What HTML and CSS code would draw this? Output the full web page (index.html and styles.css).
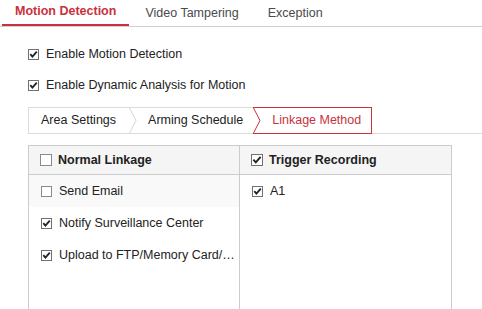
FILE: index.html
```html
<!DOCTYPE html>
<html>
<head>
<meta charset="utf-8">
<link rel="stylesheet" href="styles.css">
</head>
<body>
<div class="page">
  <div class="tabs">
    <div class="tab active">Motion Detection</div>
    <div class="tab">Video Tampering</div>
    <div class="tab">Exception</div>
  </div>

  <div class="options">
    <label class="opt">
      <svg class="cb" viewBox="0 0 11 11" width="11" height="11"><rect x="0.5" y="0.5" width="10" height="10" fill="#fff" stroke="#707070"/><polyline points="2.3,5.2 4.4,7.6 8.8,2.6" fill="none" stroke="#222" stroke-width="1.8"/></svg>
      <span>Enable Motion Detection</span>
    </label>
    <label class="opt">
      <svg class="cb" viewBox="0 0 11 11" width="11" height="11"><rect x="0.5" y="0.5" width="10" height="10" fill="#fff" stroke="#707070"/><polyline points="2.3,5.2 4.4,7.6 8.8,2.6" fill="none" stroke="#222" stroke-width="1.8"/></svg>
      <span>Enable Dynamic Analysis for Motion</span>
    </label>
  </div>

  <div class="subtabs">
    <div class="group">
      <div class="stab first">Area Settings</div>
      <svg class="sep" viewBox="0 0 8 25" width="8" height="25"><polyline points="0.5,0 7,12.5 0.5,25" fill="none" stroke="#d6d6d6" stroke-width="1"/></svg>
      <div class="stab second">Arming Schedule</div>
    </div>
    <div class="stab active">
      <svg class="sep" viewBox="0 0 8 25" width="8" height="25"><polyline points="0.5,0 7,12.5 0.5,25" fill="none" stroke="#c8323e" stroke-width="1"/></svg>
      <span class="stab-text">Linkage Method</span>
    </div>
    <div class="filler"></div>
  </div>

  <div class="table">
    <div class="col">
      <div class="head">
        <svg class="cb big" viewBox="0 0 12 12" width="12" height="12"><rect x="0.5" y="0.5" width="11" height="11" fill="#fff" stroke="#8a8a8a"/></svg>
        <span>Normal Linkage</span>
      </div>
      <div class="row hl">
        <svg class="cb" viewBox="0 0 11 11" width="11" height="11"><rect x="0.5" y="0.5" width="10" height="10" fill="#fff" stroke="#8a8a8a"/></svg>
        <span>Send Email</span>
      </div>
      <div class="row">
        <svg class="cb" viewBox="0 0 11 11" width="11" height="11"><rect x="0.5" y="0.5" width="10" height="10" fill="#fff" stroke="#707070"/><polyline points="2.3,5.2 4.4,7.6 8.8,2.6" fill="none" stroke="#222" stroke-width="1.8"/></svg>
        <span>Notify Surveillance Center</span>
      </div>
      <div class="row">
        <svg class="cb" viewBox="0 0 11 11" width="11" height="11"><rect x="0.5" y="0.5" width="10" height="10" fill="#fff" stroke="#707070"/><polyline points="2.3,5.2 4.4,7.6 8.8,2.6" fill="none" stroke="#222" stroke-width="1.8"/></svg>
        <span class="ell">Upload to FTP/Memory Card/NAS</span>
      </div>
    </div>
    <div class="col right">
      <div class="head">
        <svg class="cb big" viewBox="0 0 12 12" width="12" height="12"><rect x="0.5" y="0.5" width="11" height="11" fill="#fff" stroke="#707070"/><polyline points="2.4,5.7 4.8,8.4 9.6,2.8" fill="none" stroke="#222" stroke-width="1.9"/></svg>
        <span>Trigger Recording</span>
      </div>
      <div class="row">
        <svg class="cb" viewBox="0 0 11 11" width="11" height="11"><rect x="0.5" y="0.5" width="10" height="10" fill="#fff" stroke="#707070"/><polyline points="2.3,5.2 4.4,7.6 8.8,2.6" fill="none" stroke="#222" stroke-width="1.8"/></svg>
        <span>A1</span>
      </div>
    </div>
  </div>
</div>
</body>
</html>
```

FILE: styles.css
```css
html, body {
  margin: 0;
  padding: 0;
  background: #fff;
}
body {
  font-family: "Liberation Sans", Arial, sans-serif;
  font-size: 12.5px;
  color: #333;
  overflow: hidden;
}
.page {
  width: 482px;
  height: 309px;
  overflow: hidden;
}
.tabs {
  display: flex;
  gap: 3px;
  padding-left: 2px;
  border-bottom: 1px solid #cfcfcf;
  height: 26px;
}
.tab {
  height: 25px;
  line-height: 27px;
  padding: 0 13px;
  color: #4a4a4a;
}
.tab.active {
  color: #c8323e;
  font-weight: bold;
  border-bottom: 2px solid #c8323e;
  height: 24px;
  line-height: 23px;
}
.options {
  padding: 19px 0 0 28px;
  display: flex;
  flex-direction: column;
  gap: 15px;
}
.opt {
  display: flex;
  align-items: center;
  gap: 7px;
  height: 16px;
  color: #222;
}
.cb {
  display: block;
  flex: none;
}
.subtabs {
  display: flex;
  margin: 14px 0 0 28px;
  height: 27px;
}
.group {
  display: flex;
  border: 1px solid #dcdcdc;
  border-right: none;
  height: 25px;
}
.stab {
  height: 25px;
  line-height: 25px;
  color: #222;
}
.stab.first {
  padding: 0 13px 0 12px;
}
.stab.second {
  padding: 0 10px 0 11px;
}
.stab.active {
  display: flex;
  border: 1px solid #c8323e;
  border-left: none;
  color: #c8323e;
}
.stab-text {
  padding: 0 10px 0 11px;
}
.filler {
  flex: 1;
  border-bottom: 1px solid #dcdcdc;
}
.table {
  display: flex;
  margin: 11px 0 0 28px;
  width: 422px;
  height: 200px;
  border: 1px solid #cccccc;
}
.col {
  width: 210px;
  display: flex;
  flex-direction: column;
}
.col.right {
  width: 211px;
  border-left: 1px solid #cccccc;
}
.head {
  display: flex;
  align-items: center;
  gap: 6px;
  height: 28px;
  padding-left: 11px;
  background: #f5f5f5;
  border-bottom: 1px solid #cccccc;
  font-weight: bold;
  color: #222;
}
.row {
  display: flex;
  align-items: center;
  gap: 7px;
  height: 32px;
  padding-left: 12px;
  color: #222;
}
.row.hl {
  background: #f9f9f9;
}
.ell {
  white-space: nowrap;
  overflow: hidden;
  text-overflow: ellipsis;
  max-width: 178px;
}
```
